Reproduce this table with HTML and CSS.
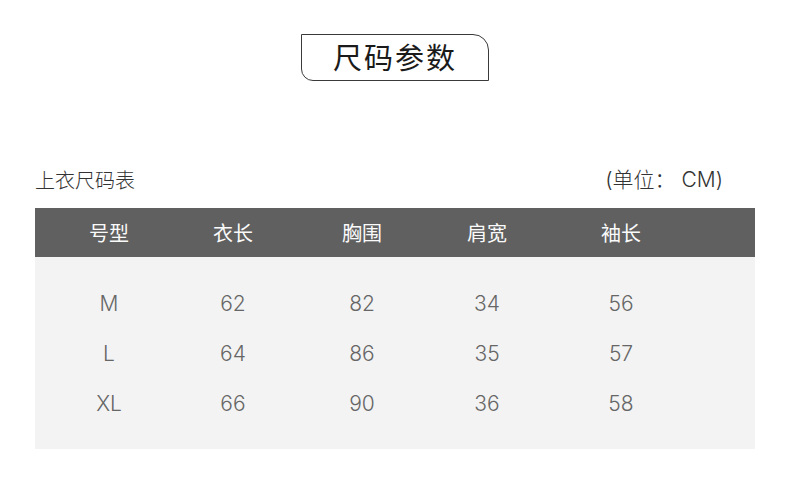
FILE: index.html
```html
<!DOCTYPE html>
<html lang="zh">
<head>
<meta charset="utf-8">
<link rel="stylesheet" href="styles.css">
</head>
<body>
<div class="page">
  <div class="title-wrap"><div class="title">尺码参数</div></div>
  <div class="caption">
    <span class="cap-left">上衣尺码表</span>
    <span class="cap-right">(单位：<span class="latin">CM</span>)</span>
  </div>
  <div class="table">
    <div class="row head">
      <span>号型</span><span>衣长</span><span>胸围</span><span>肩宽</span><span>袖长</span>
    </div>
    <div class="body">
      <div class="row"><span>M</span><span>62</span><span>82</span><span>34</span><span>56</span></div>
      <div class="row"><span>L</span><span>64</span><span>86</span><span>35</span><span>57</span></div>
      <div class="row"><span>XL</span><span>66</span><span>90</span><span>36</span><span>58</span></div>
    </div>
  </div>
</div>
</body>
</html>
```
FILE: styles.css
```css
* { box-sizing: border-box; margin: 0; padding: 0; }
html, body { background: #fff; }
body { font-family: "Noto Sans CJK SC", "Noto Sans", sans-serif; color: #333; }
.page { width: 790px; height: 490px; padding-top: 34px; }
.title-wrap { display: flex; justify-content: center; }
.title {
  width: 188px; height: 47px;
  border: 1px solid #3a3a3a;
  border-radius: 0 16px 0 12px;
  font-size: 29px; line-height: 43px; text-align: center;
  letter-spacing: 2px; color: #1a1a1a; font-weight: 400;
}
.caption {
  margin: 85px 0 0 35px; width: 688px;
  display: flex; justify-content: space-between; align-items: center;
  font-size: 20px; line-height: 28px; color: #333; font-weight: 300;
}
.cap-right { font-family: "Inter", "Noto Sans CJK SC", sans-serif; font-weight: 300; color: #333; font-size: 21px; }
.cap-right .latin { font-size: 21px; margin-left: 6px; }
.table { margin: 14px 0 0 35px; width: 720px; }
.row {
  display: grid;
  grid-template-columns: 148px 100px 158px 92px 176px;
  justify-items: center; align-items: center;
}
.head { background: #606060; height: 49px; color: #fafafa; font-size: 20px; font-weight: 400; }
.body { background: #f3f3f3; height: 192px; padding-top: 21px; }
.body .row { height: 50px; font-size: 21px; color: #666; font-family: "Inter", "Liberation Sans", sans-serif; font-weight: 300; }
```
